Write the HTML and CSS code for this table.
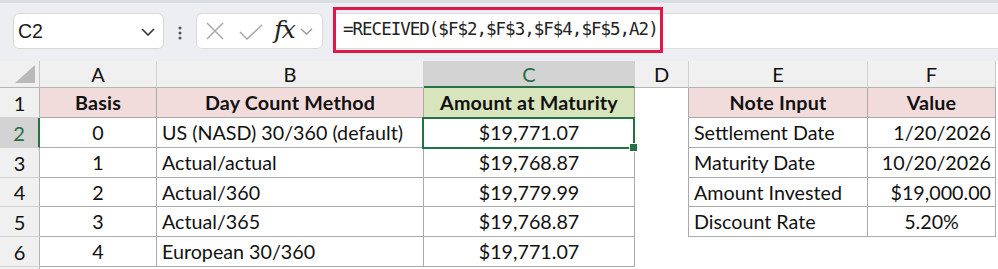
FILE: index.html
```html
<!DOCTYPE html>
<html>
<head>
<meta charset="utf-8">
<link rel="stylesheet" href="styles.css">
</head>
<body>
<div class="toolbar">
  <div class="namebox">
    <span class="nb-text">C2</span>
    <svg class="nb-chev" width="14" height="8" viewBox="0 0 14 8"><path d="M1 1 L7 7 L13 1" fill="none" stroke="#333" stroke-width="1.6"/></svg>
  </div>
  <svg class="dots" width="4" height="16" viewBox="0 0 4 16"><circle cx="2" cy="2" r="1.5" fill="#555"/><circle cx="2" cy="7" r="1.5" fill="#555"/><circle cx="2" cy="12" r="1.5" fill="#555"/></svg>
  <div class="fnbox">
    <svg class="ic-x" width="18" height="18" viewBox="0 0 18 18"><path d="M1 1 L17 17 M17 1 L1 17" stroke="#a8a8a8" stroke-width="1.5" fill="none"/></svg>
    <svg class="ic-check" width="24" height="16" viewBox="0 0 24 16"><path d="M1 8 L8 15 L23 1" stroke="#a8a8a8" stroke-width="1.5" fill="none"/></svg>
    <span class="fx">fx</span>
    <svg class="ic-chev" width="13" height="7" viewBox="0 0 13 7"><path d="M1 1 L6.5 6 L12 1" fill="none" stroke="#999" stroke-width="1.3"/></svg>
  </div>
  <div class="formula">
    <div class="fhl">=RECEIVED($F$2,$F$3,$F$4,$F$5,A2)</div>
  </div>
</div>
<div class="sheet">
  <div class="corner"><svg width="20" height="18" viewBox="0 0 20 18"><path d="M20 0 L20 18 L0 18 Z" fill="#b9b9b9"/></svg></div>
  <div class="ch">A</div>
  <div class="ch">B</div>
  <div class="ch ch-sel">C</div>
  <div class="ch">D</div>
  <div class="ch">E</div>
  <div class="ch ch-last">F</div>

  <div class="rh">1</div>
  <div class="c t hp b ctr">Basis</div>
  <div class="c t hp b ctr">Day Count Method</div>
  <div class="c t hg b ctr">Amount at Maturity</div>
  <div class="c d"></div>
  <div class="c t hp b ctr">Note Input</div>
  <div class="c t hp b ctr">Value</div>

  <div class="rh rh-sel">2</div>
  <div class="c t ctr">0</div>
  <div class="c t">US (NASD) 30/360 (default)</div>
  <div class="c t ctr sel">$19,771.07</div>
  <div class="c d"></div>
  <div class="c t">Settlement Date</div>
  <div class="c t rt">1/20/2026</div>

  <div class="rh">3</div>
  <div class="c t ctr">1</div>
  <div class="c t">Actual/actual</div>
  <div class="c t ctr">$19,768.87</div>
  <div class="c d"></div>
  <div class="c t">Maturity Date</div>
  <div class="c t rt">10/20/2026</div>

  <div class="rh">4</div>
  <div class="c t ctr">2</div>
  <div class="c t">Actual/360</div>
  <div class="c t ctr">$19,779.99</div>
  <div class="c d"></div>
  <div class="c t">Amount Invested</div>
  <div class="c t rt">$19,000.00</div>

  <div class="rh">5</div>
  <div class="c t ctr">3</div>
  <div class="c t">Actual/365</div>
  <div class="c t ctr">$19,768.87</div>
  <div class="c d"></div>
  <div class="c t">Discount Rate</div>
  <div class="c t ctr">5.20%</div>

  <div class="rh">6</div>
  <div class="c t ctr">4</div>
  <div class="c t">European 30/360</div>
  <div class="c t ctr">$19,771.07</div>
  <div class="c"></div>
  <div class="c"></div>
  <div class="c"></div>

  <div class="rh rh-end"></div>
  <div class="c"></div>
  <div class="c"></div>
  <div class="c"></div>
  <div class="c"></div>
  <div class="c"></div>
  <div class="c"></div>
</div>
</body>
</html>
```

FILE: styles.css
```css
* { box-sizing: border-box; }
html, body { margin: 0; padding: 0; }
body {
  width: 998px;
  height: 269px;
  overflow: hidden;
  background: #ffffff;
  font-family: Lato, "Liberation Sans", sans-serif;
}

.toolbar {
  height: 61px;
  background: #eceef1;
  border-top: 3px solid #d9dce0;
  display: flex;
  align-items: flex-start;
  padding-top: 10px;
}

.namebox {
  margin-left: 13px;
  width: 151px;
  height: 36px;
  background: #fff;
  border: 1px solid #d8d8d8;
  border-radius: 6px;
  display: flex;
  align-items: center;
  justify-content: space-between;
  padding: 0 8px 0 4px;
}
.nb-text {
  font-family: "Liberation Sans", Arial, sans-serif;
  font-size: 19.5px;
  color: #1a1a1a;
}
.nb-chev { margin-top: 1px; }

.dots {
  margin-left: 14px;
  margin-top: 13px;
}

.fnbox {
  margin-left: 14px;
  width: 127px;
  height: 36px;
  background: #fff;
  border: 1px solid #dcdcdc;
  border-radius: 6px;
  display: flex;
  align-items: center;
  padding-left: 9px;
}
.ic-x { margin-right: 15px; }
.ic-check { margin-right: 11px; margin-top: 2px; }
.fx {
  font-family: "DejaVu Serif", "Liberation Serif", serif;
  font-style: italic;
  font-size: 25px;
  color: #222;
  margin-right: 6px;
  margin-top: -4px;
  letter-spacing: -1.5px;
}

.formula {
  margin-left: 10px;
  flex: 1;
  height: 36px;
  background: #fff;
  border-top: 1px solid #dcdcdc;
  border-bottom: 1px solid #dcdcdc;
  position: relative;
}
.fhl {
  position: absolute;
  left: 0;
  top: -7px;
  width: 330px;
  height: 46px;
  border: 3px solid #e0184a;
  font-family: "DejaVu Sans Mono", monospace;
  font-size: 17.5px;
  letter-spacing: -1.0px;
  color: #222;
  padding-left: 7px;
  line-height: 39px;
}

.sheet {
  display: grid;
  grid-template-columns: 40px 117px 267px 211px 54px 179px 128px;
  grid-template-rows: 27px 30px 30px 30px 29px 30px 30px 10px;
  font-size: 19.7px;
  color: #111;
}

.corner {
  background: #f0f0f0;
  border-right: 1px solid #c6c6c6;
  border-bottom: 1px solid #b5b5b5;
  display: flex;
  align-items: flex-end;
  justify-content: flex-end;
  padding: 0 4px 4px 0;
}

.ch {
  background: #f0f0f0;
  border-right: 1px solid #d2d2d2;
  border-bottom: 1px solid #b5b5b5;
  display: flex;
  align-items: center;
  justify-content: center;
  font-size: 20px;
  color: #111;
}
.ch-sel {
  background: #d3d3d3;
  color: #1f6e3f;
  border-bottom: 2px solid #217346;
}
.ch-last { border-right: 1px solid #c6c6c6; }

.rh {
  background: #f0f0f0;
  border-right: 1px solid #b5b5b5;
  border-bottom: 1px solid #d2d2d2;
  display: flex;
  align-items: center;
  justify-content: center;
  font-size: 20px;
  color: #111;
}
.rh-sel {
  background: #d3d3d3;
  color: #1f6e3f;
  border-right: 2px solid #217346;
}

.c {
  display: flex;
  align-items: center;
  padding: 0 5px;
  white-space: nowrap;
}
.t {
  border-right: 1px solid #a9a9a9;
  border-bottom: 1px solid #a9a9a9;
}
.d { border-right: 1px solid #a9a9a9; }
.hp { background: #f2dcdb; }
.hg { background: #d8e4bc; }
.b { font-weight: 700; letter-spacing: 0.2px; }
.ctr { justify-content: center; }
.rt { justify-content: flex-end; padding-right: 4px; }

.sel { position: relative; }
.sel::after {
  content: "";
  position: absolute;
  left: -2px;
  top: -1px;
  right: -1px;
  bottom: -2px;
  border: 2px solid #217346;
}
.sel::before {
  content: "";
  position: absolute;
  right: -4px;
  bottom: -5px;
  width: 7px;
  height: 7px;
  background: #217346;
  border: 1px solid #fff;
  z-index: 2;
}
```
